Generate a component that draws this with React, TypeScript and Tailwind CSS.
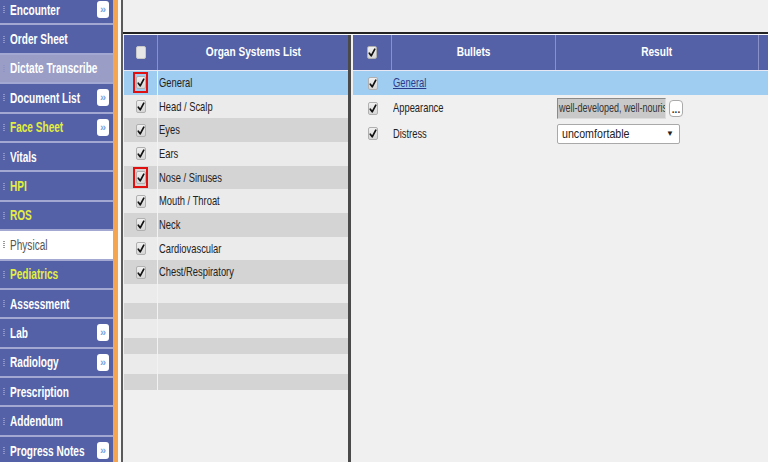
import React from "react";

type NavItem = {
  label: string;
  expand?: boolean;
  tone?: "yellow" | "active" | "muted";
};

const navItems: NavItem[] = [
  { label: "Encounter", expand: true },
  { label: "Order Sheet" },
  { label: "Dictate Transcribe", tone: "muted" },
  { label: "Document List", expand: true },
  { label: "Face Sheet", expand: true, tone: "yellow" },
  { label: "Vitals" },
  { label: "HPI", tone: "yellow" },
  { label: "ROS", tone: "yellow" },
  { label: "Physical", tone: "active" },
  { label: "Pediatrics", tone: "yellow" },
  { label: "Assessment" },
  { label: "Lab", expand: true },
  { label: "Radiology", expand: true },
  { label: "Prescription" },
  { label: "Addendum" },
  { label: "Progress Notes", expand: true },
];

const organs = [
  { name: "General", flagged: true },
  { name: "Head / Scalp" },
  { name: "Eyes" },
  { name: "Ears" },
  { name: "Nose / Sinuses", flagged: true },
  { name: "Mouth / Throat" },
  { name: "Neck" },
  { name: "Cardiovascular" },
  { name: "Chest/Respiratory" },
];

const emptyRows = [19, 16, 19, 16, 20, 16];

// screenshot text is horizontally squeezed, so squeeze Arial-width text the same way
function Sq({
  children,
  center,
  className = "scale-x-[0.75]",
}: {
  children: React.ReactNode;
  center?: boolean;
  className?: string;
}) {
  return (
    <span className={`inline-block whitespace-nowrap ${center ? "origin-center" : "origin-left"} ${className}`}>
      {children}
    </span>
  );
}

function CheckBox({ checked = true }: { checked?: boolean }) {
  return (
    <span className="flex h-[13px] w-[10px] items-center justify-center rounded-[2px] border border-[#b0b0b0] bg-gradient-to-b from-[#f0f0f0] to-[#d6d6d6]">
      {checked && (
        <svg width="8" height="9" viewBox="0 0 8 9">
          <path d="M1.3 5.2 L3.2 7.8 L6.8 1.2" fill="none" stroke="#111" strokeWidth="1.7" strokeLinecap="round" strokeLinejoin="round" />
        </svg>
      )}
    </span>
  );
}

function Grip({ light }: { light?: boolean }) {
  return (
    <span className="flex w-[2px] flex-col gap-[1px]">
      {[0, 1, 2, 3].map((i) => (
        <span key={i} className={`h-[1px] w-[2px] ${light ? "bg-[#9a9a9a]" : "bg-[#8e95c6]"}`} />
      ))}
    </span>
  );
}

function Sidebar() {
  return (
    <aside className="flex w-[113px] shrink-0 flex-col bg-[#5461a6]">
      <div className="mt-[-4px] flex flex-col">
        {navItems.map((item) => {
          const bg =
            item.tone === "active" ? "bg-white" : item.tone === "muted" ? "bg-[#9a9dc6]" : "bg-[#5461a6]";
          const color =
            item.tone === "active"
              ? "text-[#555] font-normal"
              : item.tone === "yellow"
                ? "text-[#e4ee3e] font-bold"
                : "text-white font-bold";
          return (
            <div
              key={item.label}
              className={`flex h-[29.4px] items-center border-b-2 border-[#a3a8d3] pl-[3px] pr-[4px] ${bg}`}
            >
              <Grip light={item.tone === "active"} />
              <span className={`ml-[5px] min-w-0 flex-1 text-[14px] leading-none ${color}`}>
                <Sq className="scale-x-[0.72]">{item.label}</Sq>
              </span>
              {item.expand && (
                <span className="flex h-[17px] w-[12px] shrink-0 items-center justify-center rounded-[3px] bg-white text-[11px] font-bold leading-none text-[#7ea3df]">
                  »
                </span>
              )}
            </div>
          );
        })}
      </div>
    </aside>
  );
}

function HeaderCell({ children, className = "" }: { children?: React.ReactNode; className?: string }) {
  return (
    <div className={`flex h-full items-center justify-center border-r border-[#8991c8] text-[13.5px] font-bold text-white ${className}`}>
      {children}
    </div>
  );
}

function OrganPanel() {
  return (
    <section className="flex w-[225px] shrink-0 flex-col pl-[1px]">
      <div className="flex h-[35px] bg-[#5461a6]">
        <HeaderCell className="w-[34px]">
          <span className="h-[13px] w-[10px] rounded-[2px] border border-[#c8c8c8] bg-[#e6e6e6]" />
        </HeaderCell>
        <HeaderCell className="flex-1 border-r-0">
          <Sq center>Organ Systems List</Sq>
        </HeaderCell>
      </div>
      <div className="h-[1px] bg-[#e8e8f4]" />
      {organs.map((o, i) => {
        const bg = i === 0 ? "bg-[#9fcdf1]" : i % 2 === 1 ? "bg-[#ebebeb]" : "bg-[#d4d4d4]";
        return (
          <div key={o.name} className={`flex h-[23.67px] ${bg}`}>
            <div className="flex w-[34px] items-center justify-center border-r border-[#f2f2f2]">
              {o.flagged ? (
                <span className="flex h-[21px] w-[15px] items-center justify-center border-2 border-[#e01010]">
                  <CheckBox />
                </span>
              ) : (
                <CheckBox />
              )}
            </div>
            <div className="flex flex-1 items-center pl-[1px] text-[13px] text-[#222]">
              <Sq className="scale-x-[0.72]">{o.name}</Sq>
            </div>
          </div>
        );
      })}
      {emptyRows.map((h, i) => (
        <div
          key={i}
          className={`flex ${i % 2 === 0 ? "bg-[#ebebeb]" : "bg-[#d4d4d4]"}`}
          style={{ height: h }}
        >
          <div className="w-[34px] border-r border-[#f2f2f2]" />
        </div>
      ))}
    </section>
  );
}

function BulletsPanel() {
  return (
    <section className="flex flex-1 flex-col pl-[2px]">
      <div className="flex h-[35px] bg-[#5461a6]">
        <HeaderCell className="w-[39px]">
          <CheckBox />
        </HeaderCell>
        <HeaderCell className="w-[164px]">
          <Sq center>Bullets</Sq>
        </HeaderCell>
        <HeaderCell className="w-[203px]">
          <Sq center>Result</Sq>
        </HeaderCell>
        <HeaderCell className="flex-1 border-r-0" />
      </div>
      <div className="h-[1px] bg-[#e8e8f4]" />
      <div className="flex h-[24px] items-center bg-[#9fcdf1]">
        <div className="flex w-[39px] justify-center">
          <CheckBox />
        </div>
        <span className="pl-[1px] text-[13px] text-[#2b3b8c]">
          <Sq className="scale-x-[0.72] underline">General</Sq>
        </span>
      </div>
      <div className="flex h-[26px] items-center">
        <div className="flex w-[39px] justify-center">
          <CheckBox />
        </div>
        <span className="w-[164px] pl-[1px] text-[13px] text-[#222]">
          <Sq className="scale-x-[0.72]">Appearance</Sq>
        </span>
        <div className="flex items-center gap-[3px] pl-[1px]">
          <div className="flex h-[21px] w-[109px] items-center overflow-hidden border border-t-[#8a8a8a] border-l-[#8a8a8a] border-r-[#ddd] border-b-[#ddd] bg-[#c9c9c9] pl-[1px] text-[12px] text-[#333]">
            <Sq>well-developed, well-nourished</Sq>
          </div>
          <span className="flex h-[17px] w-[14px] items-end justify-center rounded-[4px] border border-[#aaa] bg-white pb-[3px] text-[10px] font-bold leading-[6px] text-[#333]">
            ...
          </span>
        </div>
      </div>
      <div className="flex h-[25px] items-center">
        <div className="flex w-[39px] justify-center">
          <CheckBox />
        </div>
        <span className="w-[164px] pl-[1px] text-[13px] text-[#222]">
          <Sq className="scale-x-[0.72]">Distress</Sq>
        </span>
        <div className="pl-[1px]">
          <div className="flex h-[20px] w-[123px] items-center justify-between rounded-[2px] border border-[#a9a9a9] bg-white pl-[4px] pr-[5px] text-[13px] text-[#222]">
            <Sq className="scale-x-[0.82]">uncomfortable</Sq>
            <span className="text-[8px]">▼</span>
          </div>
        </div>
      </div>
    </section>
  );
}

export default function App() {
  return (
    <div className="flex h-[462px] w-[768px] overflow-hidden bg-[#f0f0f0] font-['Liberation_Sans',Arial,sans-serif]">
      <Sidebar />
      <div className="w-[5px] shrink-0 bg-[#f5a54f]" />
      <div className="w-[3px] shrink-0 bg-[#f8f8f8]" />
      <div className="w-[2px] shrink-0 bg-[#5a5a5a]" />
      <main className="flex flex-1 flex-col">
        <div className="h-[32px] shrink-0 bg-[#f0f0f0]" />
        <div className="h-[2px] shrink-0 bg-[#222]" />
        <div className="h-[1px] shrink-0 bg-[#fafafa]" />
        <div className="flex flex-1">
          <OrganPanel />
          <div className="w-[3px] shrink-0 bg-[#4a4a4a]" />
          <BulletsPanel />
        </div>
      </main>
    </div>
  );
}
